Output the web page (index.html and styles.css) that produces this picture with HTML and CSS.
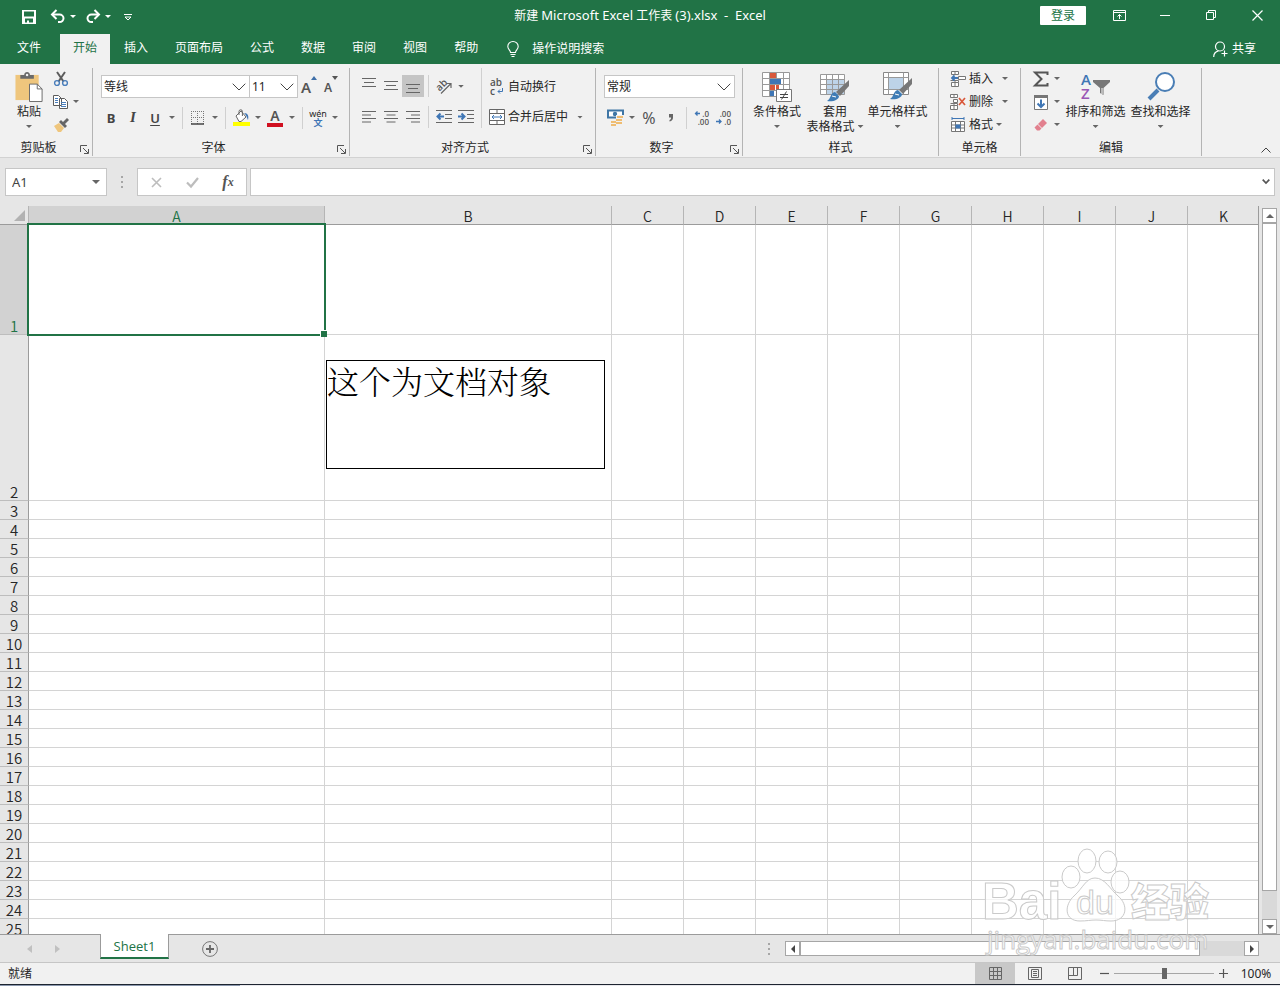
FILE: index.html
```html
<!DOCTYPE html>
<html lang="zh-CN">
<head>
<meta charset="utf-8">
<title>新建 Microsoft Excel 工作表 (3).xlsx - Excel</title>
<link rel="stylesheet" href="styles.css">
</head>
<body>
<header class="top">
  <div class="titlebar">
    <div class="quick">
      <button class="qbtn" aria-label="保存"><svg width="16" height="16" viewBox="0 0 16 16"><path fill="#fff" fill-rule="evenodd" d="M1 1h14v14H1zM3 2.500v5h10v-5zM4 9.500v4h2v-2h2v2h4v-4z"/></svg></button>
      <button class="qbtn" aria-label="撤消"><svg width="16" height="16" viewBox="0 0 16 16"><path d="M3 5.500h6.500a4 3.800 0 0 1 0 7.600H8" fill="none" stroke="#fff" stroke-width="2"/><path d="M6.500 1L2 5.500l4.500 4.500" fill="none" stroke="#fff" stroke-width="2"/></svg></button>
      <button class="dd" aria-label="撤消列表"></button>
      <button class="qbtn" aria-label="恢复"><svg width="16" height="16" viewBox="0 0 16 16"><path d="M13 5.500H6.500a4 3.800 0 0 0 0 7.600H8" fill="none" stroke="#fff" stroke-width="2"/><path d="M9.500 1L14 5.500 9.500 10" fill="none" stroke="#fff" stroke-width="2"/></svg></button>
      <button class="dd" aria-label="恢复列表"></button>
      <button class="qbtn" aria-label="自定义快速访问工具栏"><svg width="10" height="8" viewBox="0 0 10 8"><path d="M1 1.500h8M2 4l3 3 3-3z" fill="none" stroke="#fff"/></svg></button>
    </div>
    <h1 class="title">新建 <span>Microsoft Excel</span> 工作表 <span>(3).xlsx&nbsp; -&nbsp; Excel</span></h1>
    <div class="winctl">
      <button class="login">登录</button>
      <button class="wbtn" aria-label="功能区显示选项"><svg width="13" height="11" viewBox="0 0 13 11"><path d="M.5.500h12v10H.5zM.5 2.500h12M6.500 9V4.500M4.500 6.500l2-2 2 2" fill="none" stroke="#fff"/></svg></button>
      <button class="wbtn" aria-label="最小化"><svg width="11" height="11" viewBox="0 0 11 11"><path d="M0 5.500h10" stroke="#fff"/></svg></button>
      <button class="wbtn" aria-label="还原"><svg width="11" height="11" viewBox="0 0 11 11"><path d="M.5 2.500h7v7h-7zM2.500 2.500v-2h7v7h-2" fill="none" stroke="#fff"/></svg></button>
      <button class="wbtn" aria-label="关闭"><svg width="11" height="11" viewBox="0 0 11 11"><path d="M.5.500l10 10M10.500.500l-10 10" stroke="#fff" stroke-width="1.200"/></svg></button>
    </div>
  </div>
  <nav class="tabs">
    <button class="tab file">文件</button>
    <button class="tab active">开始</button>
    <button class="tab">插入</button>
    <button class="tab">页面布局</button>
    <button class="tab">公式</button>
    <button class="tab">数据</button>
    <button class="tab">审阅</button>
    <button class="tab">视图</button>
    <button class="tab">帮助</button>
    <button class="tell"><svg width="12" height="17" viewBox="0 0 12 17"><path d="M3.500 11.500C3.500 9 .8 8.500.8 5.500a5.200 5 0 0 1 10.400 0c0 3-2.700 3.500-2.700 6zM3.500 13.500h5M4.500 15.500h3" fill="none" stroke="#fff" stroke-width="1.100"/></svg>操作说明搜索</button>
    <button class="share"><svg width="15" height="17" viewBox="0 0 15 17"><circle cx="7" cy="5.500" r="4.500" fill="none" stroke="#fff" stroke-width="1.200"/><path d="M.7 16c0-3.500 2-5.500 4.800-6.200M8.500 12.500h6M11.500 9.500v6" fill="none" stroke="#fff" stroke-width="1.200"/></svg>共享</button>
  </nav>
</header>

<section class="ribbon" aria-label="开始">
  <div class="group g-clip">
    <div class="body">
      <button class="big paste"><svg width="29" height="31" viewBox="0 0 29 31"><path fill="#efc67d" d="M0 3h24v26H0z"/><path fill="#6a6a6a" d="M5 3h4c0-4 6-4 6 0h4v4H5z"/><circle cx="12" cy="3" r="1.300" fill="#f1f1f1"/><path d="M14.500 12.500h8l5 5v13h-13z" fill="#fff" stroke="#6a6a6a"/><path d="M22.500 12.500v5h5" fill="none" stroke="#6a6a6a"/></svg><span>粘贴</span><i class="car"></i></button>
      <div class="stack">
        <div class="line"><button class="ico" aria-label="剪切"><svg width="16" height="16" viewBox="0 0 16 16"><path d="M4 1l6.500 9.500M12 1L5.500 10.500" stroke="#5c5c5c" stroke-width="2" fill="none"/><circle cx="4" cy="12" r="2.400" fill="none" stroke="#4a7ebb" stroke-width="1.400"/><circle cx="12" cy="12" r="2.400" fill="none" stroke="#4a7ebb" stroke-width="1.400"/></svg></button></div>
        <div class="line"><button class="ico" aria-label="复制"><svg width="16" height="16" viewBox="0 0 16 16"><path d="M.5 1.500h5l3 3v7h-8zM6.500 4.500h5l3 3v7h-8z" fill="#fff" stroke="#5c5c5c"/><path d="M2 4.500h3M2 6.500h3M2 8.500h3M8 8.500h5M8 10.500h5M8 12.500h5" stroke="#4a7ebb"/></svg></button><button class="dd" aria-label="复制选项"></button></div>
        <div class="line"><button class="ico" aria-label="格式刷"><svg width="16" height="16" viewBox="0 0 16 16"><path fill="#efc67d" d="M1 9l5-3 5 5-3 4H5z"/><path fill="#666" d="M6 5l2-2 2 2 4-4 2 2-4 4 2 2-2 2z"/></svg></button></div>
      </div>
    </div>
    <div class="caption"><span>剪贴板</span><button class="launch" aria-label="剪贴板设置"><svg width="9" height="9" viewBox="0 0 9 9"><path d="M.5 7V.5H7M3 3l5 5M8.500 4v4.500H4" fill="none" stroke="#555"/></svg></button></div>
  </div>

  <div class="group g-font">
    <div class="body rows">
      <div class="row">
        <label class="combo c-name"><select aria-label="字体"><option>等线</option></select><svg width="14" height="8" viewBox="0 0 14 8"><path d="M.7.700L7 7 13.300.700" fill="none" stroke="#444"/></svg></label>
        <label class="combo c-size"><select aria-label="字号"><option>11</option></select><svg width="14" height="8" viewBox="0 0 14 8"><path d="M.7.700L7 7 13.300.700" fill="none" stroke="#444"/></svg></label>
        <button class="tool aup" aria-label="增大字号"><span>A</span><svg width="6" height="4" viewBox="0 0 6 4"><path d="M0 4L3 0l3 4z" fill="#3f6fa8"/></svg></button>
        <button class="tool aup adn" aria-label="减小字号"><span>A</span><svg width="6" height="4" viewBox="0 0 6 4"><path d="M0 0l3 4 3-4z" fill="#555"/></svg></button>
      </div>
      <div class="row">
        <button class="tool b">B</button><button class="tool i">I</button><button class="tool u">U</button><button class="dd" aria-label="下划线选项"></button>
        <span class="sep"></span>
        <button class="tool" aria-label="边框"><svg width="14" height="14" viewBox="0 0 14 14"><path d="M.5 0v13M6.500 0v13M12.500 0v13M0 .5h13M0 6.500h13" stroke="#777" stroke-dasharray="1 1"/><path d="M0 13h13" stroke="#444" stroke-width="1.500"/></svg></button><button class="dd" aria-label="边框选项"></button>
        <span class="sep"></span>
        <button class="tool" aria-label="填充颜色"><svg width="17" height="18" viewBox="0 0 17 18"><path d="M3 7l5-5 5 6-5 4.500H6z" fill="#fff" stroke="#666"/><path d="M6 6V2.500a1.700 1.700 0 0 1 3.400 0V7" fill="none" stroke="#666"/><path d="M11 4c4 0 5 3 4 7-1-2-1-4-4-7z" fill="#3f76b5"/><path d="M0 13h17v4H0z" fill="#ffff00"/></svg></button><button class="dd" aria-label="填充颜色选项"></button>
        <button class="tool fc" aria-label="字体颜色"><span>A</span></button><button class="dd" aria-label="字体颜色选项"></button>
        <span class="sep"></span>
        <button class="tool wen" aria-label="拼音指南"><span>wén</span><b>文</b></button><button class="dd" aria-label="拼音选项"></button>
      </div>
    </div>
    <div class="caption"><span>字体</span><button class="launch" aria-label="字体设置"><svg width="9" height="9" viewBox="0 0 9 9"><path d="M.5 7V.5H7M3 3l5 5M8.500 4v4.500H4" fill="none" stroke="#555"/></svg></button></div>
  </div>

  <div class="group g-align">
    <div class="body halves">
      <div class="rows">
        <div class="row">
          <button class="tool" aria-label="顶端对齐"><svg width="14" height="16" viewBox="0 0 14 16"><path d="M0 .5h14M2 4.500h10M0 8.500h14" stroke="#666"/></svg></button><button class="tool" aria-label="垂直居中"><svg width="14" height="16" viewBox="0 0 14 16"><path d="M0 3.500h14M2 7.500h10M0 11.500h14" stroke="#666"/></svg></button><button class="tool on" aria-label="底端对齐"><svg width="14" height="16" viewBox="0 0 14 16"><path d="M0 6.500h14M2 10.500h10M0 14.500h14" stroke="#666"/></svg></button>
          <span class="sep"></span>
          <button class="tool" aria-label="方向"><svg width="18" height="17" viewBox="0 0 18 17"><text x="1" y="11" class="t-ab" transform="rotate(-45 6 8)">ab</text><path d="M6 15.500L15.500 6M11.500 5.500h4.500V10" fill="none" stroke="#666" stroke-width="1.200"/></svg></button><button class="dd" aria-label="方向选项"></button>
        </div>
        <div class="row">
          <button class="tool" aria-label="左对齐"><svg width="14" height="12" viewBox="0 0 14 12"><path d="M0 .5h14M0 4h9M0 7.500h14M0 11h9" stroke="#666"/></svg></button><button class="tool" aria-label="居中"><svg width="14" height="12" viewBox="0 0 14 12"><path d="M0 .5h14M2.500 4h9M0 7.500h14M2.500 11h9" stroke="#666"/></svg></button><button class="tool" aria-label="右对齐"><svg width="14" height="12" viewBox="0 0 14 12"><path d="M0 .5h14M5 4h9M0 7.500h14M5 11h9" stroke="#666"/></svg></button>
          <span class="sep"></span>
          <button class="tool" aria-label="减少缩进量"><svg width="16" height="13" viewBox="0 0 16 13"><path d="M0 .5h16M9 4.500h7M9 8.500h7M0 12.500h16" stroke="#666"/><path d="M8 6.500H2M4.500 3.500l-3 3 3 3" fill="none" stroke="#3f76b5" stroke-width="2"/></svg></button><button class="tool" aria-label="增加缩进量"><svg width="16" height="13" viewBox="0 0 16 13"><path d="M0 .5h16M9 4.500h7M9 8.500h7M0 12.500h16" stroke="#666"/><path d="M0 6.500h6M3.500 3.500l3 3-3 3" fill="none" stroke="#3f76b5" stroke-width="2"/></svg></button>
        </div>
      </div>
      <div class="rows wrapcol">
        <button class="text"><span class="abc" aria-hidden="true"><b>ab</b><b>c<svg width="6" height="6" viewBox="0 0 6 6"><path d="M5.500 0v3.500H1M3 1.500l-2 2 2 2" fill="none" stroke="#3f76b5"/></svg></b></span>自动换行</button>
        <div class="row"><button class="text"><svg width="16" height="16" viewBox="0 0 16 16"><path d="M.5.500h15v15H.5zM.5 4.500h15M.5 11.500h15M8 .5v4M8 11.500v4" fill="#fff" stroke="#666"/><path d="M3 8h10M5 6L3 8l2 2M11 6l2 2-2 2" fill="none" stroke="#3f76b5"/></svg>合并后居中</button><button class="dd far" aria-label="合并选项"></button></div>
      </div>
    </div>
    <div class="caption"><span>对齐方式</span><button class="launch" aria-label="对齐设置"><svg width="9" height="9" viewBox="0 0 9 9"><path d="M.5 7V.5H7M3 3l5 5M8.500 4v4.500H4" fill="none" stroke="#555"/></svg></button></div>
  </div>

  <div class="group g-num">
    <div class="body rows">
      <div class="row"><label class="combo c-num"><select aria-label="数字格式"><option>常规</option></select><svg width="14" height="8" viewBox="0 0 14 8"><path d="M.7.700L7 7 13.300.700" fill="none" stroke="#444"/></svg></label></div>
      <div class="row">
        <button class="tool" aria-label="会计数字格式"><svg width="17" height="17" viewBox="0 0 17 17"><path d="M1 1.500h15v7H1z" fill="#fff" stroke="#3f76a5" stroke-width="2"/><circle cx="8" cy="5" r="2.200" fill="#3f76a5"/><path d="M9 6h8v11H3v-6h6z" fill="#f1f1f1"/><g fill="#efbd73"><path d="M10 7h6v2h-6zM9 10h6v2H9zM9 13h6v2H9zM4 12h5v2H4zM4 15h5v2H4z"/></g></svg></button><button class="dd" aria-label="会计格式选项"></button><button class="tool pct">%</button><button class="tool" aria-label="千位分隔样式"><svg width="6" height="10" viewBox="0 0 6 10"><path d="M1 1h4v3.500c0 2-1 3.500-3.500 4V7C3 6.500 3 5.500 3 4.500H1z" fill="#666"/></svg></button>
        <span class="sep"></span>
        <button class="tool" aria-label="增加小数位数"><svg width="16" height="16" viewBox="0 0 16 16"><path d="M6 3.500H1.500M3.500 1.500l-2 2 2 2" fill="none" stroke="#3f76b5" stroke-width="1.300"/><text x="15" y="7" text-anchor="end" class="t-dec">.0</text><text x="15" y="15" text-anchor="end" class="t-dec">.00</text></svg></button><button class="tool" aria-label="减少小数位数"><svg width="16" height="16" viewBox="0 0 16 16"><path d="M0 11.500h5M3 9.500l2 2-2 2" fill="none" stroke="#3f76b5" stroke-width="1.300"/><text x="15" y="7" text-anchor="end" class="t-dec">.00</text><text x="15" y="15" text-anchor="end" class="t-dec">.0</text></svg></button>
      </div>
    </div>
    <div class="caption"><span>数字</span><button class="launch" aria-label="数字设置"><svg width="9" height="9" viewBox="0 0 9 9"><path d="M.5 7V.5H7M3 3l5 5M8.500 4v4.500H4" fill="none" stroke="#555"/></svg></button></div>
  </div>

  <div class="group g-style">
    <div class="body">
      <button class="big"><svg width="30" height="30" viewBox="0 0 30 30"><path d="M.5.500h27v24H.5z" fill="#fff"/><path d="M8 0h6v6H8zM8 12h5v6H8z" fill="#d9583b"/><path d="M8 6h11v6H8zM8 18h4v6H8z" fill="#3f76b5"/><path d="M14 12h3v6h-3z" fill="#d9583b"/><path d="M.5.500h27v24H.5zM.5 6.500h27M.5 12.500h27M.5 18.500h27M7.500.500v24M21.500.500v24M14.500.500v6" fill="none" stroke="#999"/><path d="M14.500 17.500h15v12h-15z" fill="#fff" stroke="#777"/><path d="M18 22.500h8M18 25.500h8M24.500 19.500l-5 8" stroke="#444"/></svg><span>条件格式</span><i class="car"></i></button>
      <button class="big"><svg width="30" height="30" viewBox="0 0 30 30"><path d="M.5 2.500h24v20H.5z" fill="#fff"/><path d="M6.500 8h18v14.500h-18z" fill="#bdd3e8"/><path d="M.5 2.500h24v20H.5zM.5 7.500h24M.5 12.500h24M.5 17.500h24M6.500 2.500v20M12.500 2.500v20M18.500 2.500v20" fill="none" stroke="#999"/><path d="M29 8v6l-9 10-4-4z" fill="#777"/><path d="M15 20l4 4c0 4-6 6-12 5 4-2 3-8 8-9z" fill="#3f7cb5"/><path d="M12 24l4 1" stroke="#fff"/></svg><span>套用</span><span class="two">表格格式<i class="car"></i></span></button>
      <button class="big wide"><svg width="30" height="30" viewBox="0 0 30 30"><path d="M.5.500h25v22H.5z" fill="#fff" stroke="#888"/><path d="M6 6h14v11H6z" fill="#bdd3e8"/><path d="M.5 5.500h25M.5 17.500h25M5.500.500v22M20.500.500v22" stroke="#999"/><path d="M29 6v6l-9 10-4-4z" fill="#777"/><path d="M15 18l4 4c0 4-6 6-12 5 4-2 3-8 8-9z" fill="#3f7cb5"/><path d="M12 22l4 1" stroke="#fff"/></svg><span>单元格样式</span><i class="car"></i></button>
    </div>
    <div class="caption"><span>样式</span></div>
  </div>

  <div class="group g-cell">
    <div class="body">
      <div class="stack">
        <div class="line"><button class="text"><svg width="16" height="16" viewBox="0 0 16 16"><path d="M1.500.500h7v3h-7zM5 .5v3M1.500 11.500h7v4h-7zM5 9.500v6M.5 9.500h8v2" fill="#fff" stroke="#777"/><path d="M8.500 5.500h7v3h-7z" fill="#fff" stroke="#777"/><path d="M8 7H2M4.500 4.500L2 7l2.500 2.500" fill="none" stroke="#3f76b5" stroke-width="1.800"/></svg>插入</button><button class="dd far" aria-label="插入选项"></button></div>
        <div class="line"><button class="text"><svg width="16" height="16" viewBox="0 0 16 16"><path d="M.5.500h7v3h-7zM4 .5v3M.5 11.500h7v4h-7zM4 9.500v6M.5 9.500h7v2M3.500 5.500h4v3h-4z" fill="#fff" stroke="#777"/><path d="M9 4l6 7M15 4l-6 7" stroke="#d9583b" stroke-width="1.700"/></svg>删除</button><button class="dd far" aria-label="删除选项"></button></div>
        <div class="line"><button class="text"><svg width="16" height="16" viewBox="0 0 16 16"><path d="M1.500 4.500h13v10h-13zM1.500 8h13M1.500 11h13M5.500 4.500v10M10.500 4.500v10" fill="#fff" stroke="#777"/><path d="M5.500 7.500h5v4h-5z" fill="#3f76b5"/><path d="M2 1.500h12M2 0v3M14 0v3" stroke="#3f76b5"/></svg>格式</button><button class="dd" aria-label="格式选项"></button></div>
      </div>
    </div>
    <div class="caption"><span>单元格</span></div>
  </div>

  <div class="group g-edit">
    <div class="body">
      <div class="stack">
        <div class="line"><button class="ico" aria-label="自动求和"><svg width="16" height="16" viewBox="0 0 16 16"><path d="M14.500 4V1.500H2L8.500 8 2 14.500h12.500V12" fill="none" stroke="#555" stroke-width="2"/></svg></button><button class="dd" aria-label="求和选项"></button></div>
        <div class="line"><button class="ico" aria-label="填充"><svg width="16" height="16" viewBox="0 0 16 16"><path d="M1.500 1.500h13v14h-13z" fill="#fff" stroke="#777"/><path d="M1 1h14v3H1z" fill="#777"/><path d="M8 5.500v7M4.500 9.500L8 13l3.500-3.500" fill="none" stroke="#3f76b5" stroke-width="2"/></svg></button><button class="dd" aria-label="填充选项"></button></div>
        <div class="line"><button class="ico" aria-label="清除"><svg width="16" height="16" viewBox="0 0 16 16"><path d="M10 2l4 4-5 5-4-4z" fill="#e2808e"/><path d="M4.500 7.500l4 4-2 2H4L1.500 10.500z" fill="#e2808e"/></svg></button><button class="dd" aria-label="清除选项"></button></div>
      </div>
      <button class="big wide"><svg width="30" height="30" viewBox="0 0 30 30"><text x="0" y="13" class="t-az" fill="#3f76b5">A</text><text x="0" y="27" class="t-az" fill="#9a57b5">Z</text><path d="M12 8h17v2l-6.500 6v7l-3.500-2v-5L12 10z" fill="#777"/><path d="M21 16v6" stroke="#fff"/></svg><span>排序和筛选</span><i class="car"></i></button>
      <button class="big wide"><svg width="30" height="30" viewBox="0 0 30 30"><path d="M12 18L3 27" stroke="#4a7eb5" stroke-width="4"/><circle cx="19" cy="10" r="9" fill="#fff" stroke="#4a7eb5" stroke-width="2"/></svg><span>查找和选择</span><i class="car"></i></button>
    </div>
    <div class="caption"><span>编辑</span></div>
  </div>
  <button class="collapse" aria-label="折叠功能区"><svg width="10" height="6" viewBox="0 0 10 6"><path d="M.5 5.500L5 1l4.500 4.500" fill="none" stroke="#444"/></svg></button>
</section>

<section class="fbar">
  <label class="namebox"><input value="A1" aria-label="名称框"><i class="car"></i></label>
  <svg class="grip" width="2" height="12" viewBox="0 0 2 12"><path d="M0 0h2v2H0zM0 5h2v2H0zM0 10h2v2H0z" fill="#a6a6a6"/></svg>
  <div class="fxbox">
    <button aria-label="取消"><svg width="11" height="11" viewBox="0 0 11 11"><path d="M1 1l9 9M10 1l-9 9" stroke="#bdbdbd" stroke-width="1.600"/></svg></button>
    <button aria-label="输入"><svg width="13" height="11" viewBox="0 0 13 11"><path d="M1 5.500l4 4L12 1" fill="none" stroke="#bdbdbd" stroke-width="2.200"/></svg></button>
    <button class="fx" aria-label="插入函数">f<sub>x</sub></button>
  </div>
  <label class="formula"><input aria-label="编辑栏"><svg width="8" height="6" viewBox="0 0 8 6"><path d="M.7.700L4 4 7.300.700" fill="none" stroke="#555" stroke-width="1.700"/></svg></label>
</section>

<main class="work">
  <div class="sheet">
    <table class="grid">
      <colgroup><col class="w-head"><col class="w-a"><col class="w-b"><col class="w-n" span="9"></colgroup>
      <thead><tr id="cols"><th class="corner"><svg width="11" height="11" viewBox="0 0 11 11"><path d="M11 0v11H0z" fill="#b2b2b2"/></svg></th></tr></thead>
      <tbody id="cells"></tbody>
    </table>
  </div>
  <div class="vscroll">
    <button aria-label="向上滚动"><svg width="8" height="4" viewBox="0 0 8 4"><path d="M0 4l4-4 4 4z" fill="#666"/></svg></button>
    <div class="vtrack"><div class="vthumb"></div></div>
    <button aria-label="向下滚动"><svg width="8" height="4" viewBox="0 0 8 4"><path d="M0 0l4 4 4-4z" fill="#666"/></svg></button>
  </div>
  <svg class="mark" width="240" height="114" viewBox="0 0 240 114">
    <g class="m-shape">
      <ellipse cx="90" cy="33" rx="9" ry="11"/>
      <ellipse cx="106" cy="17" rx="9" ry="12"/>
      <ellipse cx="127" cy="18" rx="9" ry="11"/>
      <ellipse cx="139" cy="38" rx="9" ry="11"/>
      <path d="M114 34c10 0 15 11 23 18 11 9 9 25-7 25-6 0-9-1-15-1s-9 1-16 1c-16 0-16-16-6-25 9-8 12-18 21-18z"/>
    </g>
    <text class="m-big" x="1" y="75">Bai</text>
    <text class="m-du" x="95" y="70">du</text>
    <text class="m-cjk" x="150" y="72">经验</text>
    <text class="m-url" x="6" y="105">jingyan.baidu.com</text>
  </svg>
</main>

<footer>
  <div class="sheetbar">
    <button class="nav" aria-label="上一张"><svg width="5" height="8" viewBox="0 0 5 8"><path d="M5 0v8L0 4z" fill="#c0c0c0"/></svg></button>
    <button class="nav" aria-label="下一张"><svg width="5" height="8" viewBox="0 0 5 8"><path d="M0 0v8l5-4z" fill="#c0c0c0"/></svg></button>
    <button class="stab">Sheet1</button>
    <button class="add" aria-label="新工作表"><svg width="16" height="16" viewBox="0 0 16 16"><circle cx="8" cy="8" r="7.400" fill="none" stroke="#777"/><path d="M8 4v8M4 8h8" stroke="#666" stroke-width="1.800"/></svg></button>
    <svg class="grip end" width="2" height="12" viewBox="0 0 2 12"><path d="M0 0h2v2H0zM0 5h2v2H0zM0 10h2v2H0z" fill="#a6a6a6"/></svg>
    <div class="hscroll">
      <button aria-label="向左滚动"><svg width="4" height="8" viewBox="0 0 4 8"><path d="M4 0v8L0 4z" fill="#444"/></svg></button>
      <div class="htrack"><div class="hthumb"></div></div>
      <button aria-label="向右滚动"><svg width="4" height="8" viewBox="0 0 4 8"><path d="M0 0v8l4-4z" fill="#444"/></svg></button>
    </div>
  </div>
  <div class="status">
    <span class="ready">就绪</span>
    <button class="view on" aria-label="普通"><svg width="13" height="13" viewBox="0 0 13 13"><path d="M.5.500h12v12H.5zM.5 4.500h12M.5 8.500h12M4.500.500v12M8.500.500v12" fill="none" stroke="#666"/></svg></button>
    <button class="view" aria-label="页面布局"><svg width="14" height="13" viewBox="0 0 14 13"><path d="M.5.500h13v12H.5zM3.500 2.500h7v8h-7zM5 4.500h4M5 6.500h4M5 8.500h4" fill="none" stroke="#666"/></svg></button>
    <button class="view" aria-label="分页预览"><svg width="14" height="13" viewBox="0 0 14 13"><path d="M.5.500h13v12H.5zM5.500.500v8M9.500.500v8M.5 8.500h9" fill="none" stroke="#666"/></svg></button>
    <button class="zoom" aria-label="缩小"><svg width="9" height="9" viewBox="0 0 9 9"><path d="M0 4.500h9" stroke="#555" stroke-width="1.200"/></svg></button>
    <input class="slider" type="range" min="0" max="100" value="50" aria-label="缩放">
    <button class="zoom" aria-label="放大"><svg width="9" height="9" viewBox="0 0 9 9"><path d="M0 4.500h9M4.500 0v9" stroke="#555" stroke-width="1.200"/></svg></button>
    <button class="pctzoom">100%</button>
  </div>
  <div class="edge"></div>
</footer>
<script src="script.js"></script>
</body>
</html>
```
FILE: styles.css
```css
* { box-sizing: border-box; }
body {
  margin: 0;
  height: 100vh;
  display: flex;
  flex-direction: column;
  overflow: hidden;
  background: #e6e6e6;
  color: #262626;
  font: 12px/16px "Noto Sans", "Noto Sans CJK SC", sans-serif;
}
button, input, select { font: inherit; color: inherit; }
button {
  border: 0;
  padding: 0;
  background: none;
  display: flex;
  align-items: center;
  justify-content: center;
  white-space: nowrap;
  flex: none;
}
svg { display: block; flex: none; overflow: visible; }

/* title bar and tabs */
.top { background: #217346; color: #fff; }
.titlebar { display: grid; grid-template-columns: 1fr auto 1fr; height: 30px; }
.quick { display: flex; align-items: center; padding: 2px 0 0 18px; }
.qbtn { width: 22px; height: 22px; margin-right: 7px; }
.quick .dd { width: 10px; margin-left: -8px; margin-right: 4px; color: #fff; }
.title { margin: 0; font-size: 12px; font-weight: 400; line-height: 30px; }
.title span { font-size: 13px; }
.winctl { display: flex; align-items: center; justify-content: flex-end; }
.login { background: #fff; color: #217346; width: 46px; height: 19px; margin-right: 10px; border-radius: 1px; }
.wbtn { width: 46px; height: 30px; }
.tabs { display: flex; gap: 1px; height: 34px; padding: 4px 24px 0 4px; }
.tab { padding: 0 13px 2px; height: 30px; }
.tab.file { margin-right: 5px; }
.tab.active { background: #f1f1f1; color: #217346; }
.tell { gap: 13px; margin-left: 15px; }
.share { gap: 4px; margin-left: auto; }

/* ribbon */
.ribbon {
  display: flex;
  background: #f1f1f1;
  border-bottom: 1px solid #d2d2d2;
  padding: 4px 0 1px;
}
.group { display: flex; flex-direction: column; border-right: 1px solid #b4b4b4; flex: none; }
.g-clip { width: 93px; }
.g-font { width: 257px; }
.g-align { width: 246px; }
.g-num { width: 147px; }
.g-style { width: 196px; }
.g-cell { width: 82px; }
.g-edit { width: 181px; }
.body { display: flex; height: 71px; }
.g-clip .body { padding-left: 15px; }
.g-font .body { padding-left: 7px; }
.g-align .body, .g-num .body { padding-left: 8px; }
.g-style .body { padding-left: 5px; }
.g-cell .body { padding-left: 11px; }
.g-edit .body { padding-left: 10px; }
.rows { display: flex; flex-direction: column; gap: 8px; padding-top: 7px; }
.halves .rows { height: 60px; }
.row { display: flex; height: 23px; align-items: center; }
.tool { width: 22px; height: 22px; }
.tool.on { background: #c5c5c5; }
.dd { width: 12px; height: 22px; color: #666; }
.dd.far { margin-left: 6px; }
.dd::after, .car {
  content: "";
  display: block;
  width: 6px;
  height: 3px;
  background: currentColor;
  clip-path: polygon(0 0, 100% 0, 50% 100%);
}
.car { color: #666; }
.sep { width: 1px; height: 22px; margin: 0 4px; background: #d0d0d0; }
.wrapcol { border-left: 1px solid #d0d0d0; margin-left: 4px; padding-left: 7px; align-items: flex-start; }
.wrapcol > .text { height: 23px; }
.text { gap: 3px; }
.abc { width: 16px; display: flex; flex-direction: column; padding-left: 1px; font: 600 10px/9px "Open Sans", sans-serif; color: #555; text-align: left; }
.abc b { display: flex; gap: 2px; align-items: center; font-weight: 600; }
.stack { display: flex; flex-direction: column; margin-top: -1px; }
.line { display: flex; height: 23px; align-items: center; }
.ico { width: 20px; height: 22px; }
.g-clip .stack { margin-left: 9px; }
.g-clip .ico { width: 18px; }
.big { display: flex; flex-direction: column; justify-content: flex-start; align-self: flex-start; width: 58px; padding-top: 4px; }
.big.wide { width: 65px; }
.g-style .wide { margin-left: 1px; }
.big.paste { width: 28px; }
.big > span { line-height: 15px; margin-top: 2px; }
.big > svg { height: 30px; }
.big > .car { margin-top: 6px; }
.big > .two { display: flex; align-items: center; gap: 3px; margin-top: 0; }
.caption { display: flex; height: 17px; align-items: center; }
.caption span { flex: 1; text-align: center; }
.launch { width: 15px; height: 16px; padding-top: 4px; }
.collapse { margin: auto 9px 3px auto; }
.combo, .namebox, .formula { display: grid; background: #fff; border: 1px solid #c6c6c6; align-items: center; }
.combo > *, .namebox > *, .formula > * { grid-area: 1 / 1; }
.combo > svg { justify-self: end; margin-right: 3px; pointer-events: none; }
.combo select { appearance: none; border: 0; background: none; width: 100%; height: 21px; padding: 0 2px; border-radius: 0; }
.c-name { width: 149px; margin-left: 1px; }
.c-size { width: 49px; margin-left: -1px; }
.c-num { width: 131px; }
.aup { align-items: flex-start; }
.aup span { font-size: 15px; font-weight: 600; color: #555; line-height: 22px; }
.adn span { font-size: 12px; line-height: 24px; }
.b { font-size: 13px; font-weight: 700; color: #444; }
.i { font: italic 700 15px "Liberation Serif", serif; color: #444; }
.u { font-size: 13px; font-weight: 600; text-decoration: underline; text-underline-offset: 2px; color: #444; }
.fc { flex-direction: column; color: #555; }
.fc span { font-size: 14px; font-weight: 600; line-height: 14px; width: 16px; border-bottom: 4px solid #d01020; }
.wen { flex-direction: column; }
.wen span { font-size: 9px; line-height: 9px; }
.wen b { font-size: 9px; line-height: 9px; color: #3f76b5; }
.pct { font-size: 16px; color: #555; }
.t-ab { font: 600 10px "Open Sans", sans-serif; fill: #555; }
.t-dec { font: 600 8px "Open Sans", sans-serif; fill: #555; }
.t-az { font: 600 15px "Open Sans", sans-serif; }

/* formula bar */
.fbar { display: flex; align-items: center; height: 48px; padding: 0 5px; flex: none; }
.namebox { width: 102px; height: 28px; }
.namebox input { border: 0; background: none; width: 100%; padding: 0 6px; color: #444; font-size: 13px; }
.namebox .car { justify-self: end; width: 8px; height: 4px; margin-right: 6px; }
.grip { margin: 0 14px; }
.fxbox { display: flex; width: 110px; height: 28px; background: #fff; border: 1px solid #c6c6c6; }
.fxbox button { flex: 1; }
.fx { font: italic 700 16px "Liberation Serif", serif; color: #555; }
.fx sub { font-size: 12px; }
.formula { flex: 1; height: 28px; margin-left: 3px; }
.formula input { border: 0; background: none; width: 100%; }
.formula svg { justify-self: end; margin-right: 4px; }

/* worksheet */
.work { flex: 1; min-height: 0; display: flex; position: relative; }
.sheet { flex: 1; overflow: hidden; border-right: 1px solid #9b9b9b; background: linear-gradient(#e6e6e6 18px, #fff 18px); }
.grid { table-layout: fixed; border-collapse: separate; border-spacing: 0; width: 1260px; font: 15px/18px "Noto Sans CJK SC", sans-serif; }
.w-head { width: 29px; }
.w-a { width: 296px; }
.w-b { width: 287px; }
.w-n { width: 72px; }
.grid th, .grid td { padding: 0; border-right: 1px solid #d4d4d4; border-bottom: 1px solid #d4d4d4; }
.grid th { background: #e6e6e6; font-weight: 350; vertical-align: bottom; }
.grid thead th { height: 19px; font-size: 14px; line-height: 16px; border-right-color: #b5b5b5; border-bottom-color: #9b9b9b; }
.grid tbody th { height: 19px; line-height: 14px; padding-bottom: 1px; border-right-color: #9b9b9b; border-bottom-color: #bdbdbd; }
.grid thead .corner { vertical-align: middle; }
.corner svg { margin-left: 14px; }
.grid .sel { background: #d2d2d2; color: #217346; }
.r1 { height: 110px; }
.r2 { height: 166px; }
.grid .host { position: relative; }
.cursor { position: absolute; inset: -2px; border: 2px solid #217346; }
.cursor::after { content: ""; position: absolute; right: -3px; bottom: -3px; width: 6px; height: 6px; background: #217346; border: solid #fff; border-width: 1px 0 0 1px; }
.object { position: absolute; top: 25px; left: 1px; width: 279px; height: 109px; border: 1px solid #000; background: #fff; color: #000; font: 300 32px/38px "Noto Serif CJK SC", "Noto Sans CJK SC", serif; white-space: nowrap; }

.vscroll { width: 15px; margin: 2px 3px 0; display: flex; flex-direction: column; }
.vscroll button, .hscroll button { background: #fff; border: 1px solid #a6a6a6; width: 15px; height: 15px; }
.vtrack { flex: 1; background: #d9d9d9; }
.vthumb { height: 96%; background: #fff; border: 1px solid #a6a6a6; }

.mark { position: absolute; right: 59px; top: 638px; z-index: 2; pointer-events: none; }
.mark text, .m-shape { fill: #fff; fill-opacity: 0.75; stroke: #cacaca; stroke-width: 1px; }
.m-big { font: 700 51px "Liberation Sans", sans-serif; }
.m-du { font: 34px "Liberation Sans", sans-serif; }
.m-cjk { font: 900 39px "Noto Sans CJK SC", sans-serif; }
.m-url { font: 26px "Open Sans", sans-serif; }

/* sheet tabs and status bar */
.sheetbar { display: flex; align-items: center; height: 28px; border-top: 1px solid #9b9b9b; padding-left: 15px; }
.nav { width: 28px; height: 26px; }
.stab { align-self: flex-start; width: 69px; height: 25px; margin: -1px 0 0 29px; background: #fff; color: #217346; border: solid #9b9b9b; border-width: 0 1px; border-bottom: 2px solid #217346; font-family: "Open Sans", sans-serif; font-size: 13px; }
.add { width: 22px; margin-left: 30px; }
.end { margin: 0 15px 0 auto; }
.hscroll { display: flex; width: 474px; margin-right: 21px; height: 15px; }
.htrack { flex: 1; background: #d9d9d9; }
.hthumb { width: 90%; height: 15px; background: #fff; border: 1px solid #a6a6a6; }
.status { display: flex; align-items: stretch; height: 22px; background: #f1f1f1; border-top: 1px solid #c6c6c6; padding: 0 8px; }
.ready { margin-right: auto; line-height: 21px; }
.view { width: 40px; }
.view.on { background: #c8c8c8; }
.zoom { width: 19px; }
.slider { appearance: none; background: none; width: 100px; margin: 0; }
.slider::-webkit-slider-runnable-track { height: 11px; background: linear-gradient(#a6a6a6, #a6a6a6) center / 100% 1px no-repeat; }
.slider::-webkit-slider-thumb { appearance: none; width: 5px; height: 11px; background: #666; }
.pctzoom { width: 32px; margin-left: 7px; }
.edge { height: 2px; border-top: 1px solid #1d2430; background: linear-gradient(90deg, #8a97ad 240px, #e8e8ec 240px); }
```
FILE: script.js
```js
const columns = "ABCDEFGHIJK".split("");
const rowCount = 25;

const head = document.getElementById("cols");
for (const name of columns) {
  const th = document.createElement("th");
  th.textContent = name;
  th.scope = "col";
  if (name === "A") th.className = "sel";
  head.append(th);
}

const body = document.getElementById("cells");
for (let r = 1; r <= rowCount; r++) {
  const tr = document.createElement("tr");
  tr.className = "r" + r;
  const th = document.createElement("th");
  th.textContent = r;
  th.scope = "row";
  if (r === 1) th.className = "sel";
  tr.append(th);
  for (const name of columns) {
    const td = document.createElement("td");
    if (r === 1 && name === "A") {
      td.className = "host";
      td.innerHTML = '<div class="cursor"></div>';
    }
    if (r === 2 && name === "B") {
      td.className = "host";
      td.innerHTML = '<div class="object">这个为文档对象</div>';
    }
    tr.append(td);
  }
  body.append(tr);
}
```
